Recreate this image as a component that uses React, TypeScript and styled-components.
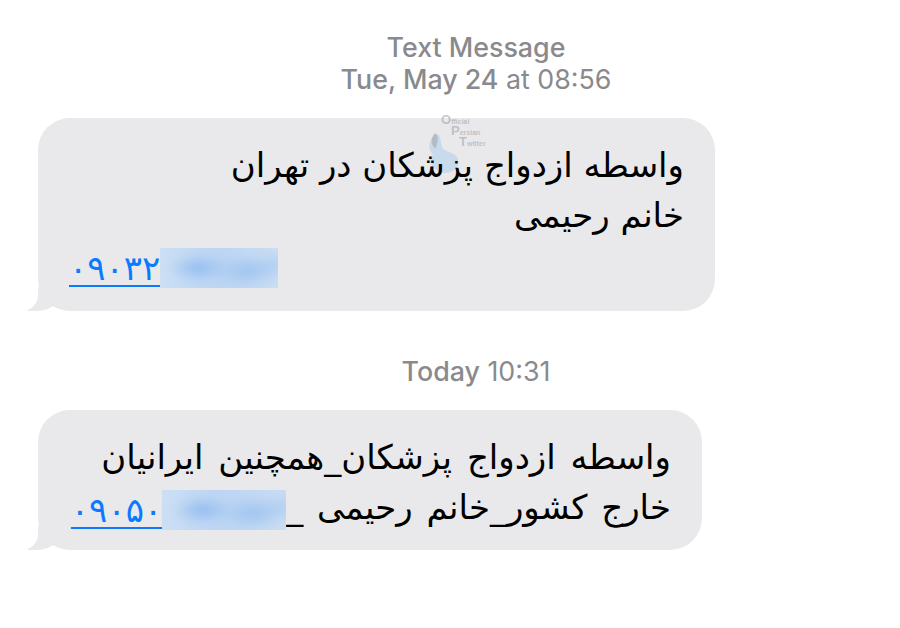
import React from "react";
import styled, { createGlobalStyle } from "styled-components";

const Global = createGlobalStyle`
  html, body { margin: 0; padding: 0; background: #ffffff; }
  body { width: 900px; height: 628px; overflow: hidden; }
`;

const Thread = styled.div`
  display: flex;
  flex-direction: column;
  padding: 31px 0 0 38px;
  font-family: Inter, "Liberation Sans", sans-serif;
`;

const Stamp = styled.div<{ $mt: number; $mb: number }>`
  display: flex;
  flex-direction: column;
  align-items: center;
  width: 876px;
  margin-top: ${(p) => p.$mt}px;
  margin-bottom: ${(p) => p.$mb}px;
  color: #8a8a8e;
  font-size: 26.8px;
  line-height: 32px;
`;

const StampLine = styled.div``;

const Strong = styled.span`
  font-weight: 500;
`;

const Bubble = styled.div<{ $w: number; $h: number }>`
  position: relative;
  box-sizing: border-box;
  width: ${(p) => p.$w}px;
  height: ${(p) => p.$h}px;
  background: #e9e9eb;
  border-radius: 32px;
  padding: 22px 31px 0 31px;
  font-family: "DejaVu Sans", "Noto Sans", sans-serif;
  font-size: 34px;
  line-height: 50px;
  color: #000000;

  &::before {
    content: "";
    position: absolute;
    left: -10px;
    bottom: 0;
    width: 30px;
    height: 24px;
    background: #e9e9eb;
    border-bottom-right-radius: 22px 14px;
  }
  &::after {
    content: "";
    position: absolute;
    left: -30px;
    bottom: 0;
    width: 30px;
    height: 24px;
    background: #ffffff;
    border-bottom-right-radius: 16px;
  }
`;

const Line = styled.div<{ $dir: "rtl" | "ltr"; $ws?: number }>`
  direction: ${(p) => p.$dir};
  text-align: ${(p) => (p.$dir === "rtl" ? "right" : "left")};
  word-spacing: ${(p) => p.$ws ?? 0}px;
  white-space: nowrap;
  position: relative;
  z-index: 1;
`;

const Phone = styled.span`
  direction: ltr;
  unicode-bidi: isolate;
  display: inline-flex;
  align-items: center;
  vertical-align: middle;
  word-spacing: 0;
`;

const Digits = styled.a`
  color: #0a7aff;
  text-decoration: underline;
  text-decoration-thickness: 2px;
  text-underline-offset: 5px;
`;

const Blur = styled.span<{ $w: number }>`
  display: inline-block;
  position: relative;
  width: ${(p) => p.$w}px;
  height: 40px;
  overflow: hidden;
  background: #d3e1f1;
`;

const BlurInk = styled.span`
  position: absolute;
  inset: -10px;
  background:
    radial-gradient(ellipse 30px 14px at 35% 50%, #8fbaf0 0%, transparent 100%),
    radial-gradient(ellipse 34px 16px at 70% 55%, #9cc2f0 0%, transparent 100%),
    radial-gradient(ellipse 26px 14px at 90% 45%, #b2cff2 0%, transparent 100%),
    linear-gradient(90deg, #cfe0f4, #bcd5f3 50%, #cddff2);
  filter: blur(5px);
`;

const Mark = styled.div`
  position: absolute;
  left: 388px;
  top: -3px;
  width: 60px;
  height: 60px;
  z-index: 0;
  pointer-events: none;
  font-family: "Liberation Sans", sans-serif;
  font-weight: 700;
  font-size: 7px;
  line-height: 9px;
  color: rgba(150, 158, 168, 0.55);
`;

const MarkWord = styled.div<{ $ml: number }>`
  margin-left: ${(p) => p.$ml}px;
  position: relative;
`;

const MarkCap = styled.span`
  font-size: 13px;
`;

const MarkBird = styled.svg`
  position: absolute;
  left: -6px;
  top: 14px;
`;

function Watermark() {
  return (
    <Mark>
      <MarkBird width="46" height="48" viewBox="0 0 42 44">
        <path d="M14 4 C 8 10, 6 18, 12 24 C 6 28, 10 36, 20 40 C 30 42, 38 34, 34 26 C 30 20, 22 22, 20 16 C 18 10, 20 6, 14 4 Z" fill="rgba(160,200,235,0.45)" />
        <path d="M14 4 C 10 8, 9 14, 14 18 C 16 12, 18 8, 14 4 Z" fill="rgba(150,150,150,0.45)" />
      </MarkBird>
      <MarkWord $ml={15}><MarkCap>O</MarkCap>fficial</MarkWord>
      <MarkWord $ml={25}><MarkCap>P</MarkCap>ersian</MarkWord>
      <MarkWord $ml={33}><MarkCap>T</MarkCap>witter</MarkWord>
    </Mark>
  );
}

export default function App() {
  return (
    <>
      <Global />
      <Thread>
        <Stamp $mt={0} $mb={23}>
          <StampLine><Strong>Text Message</Strong></StampLine>
          <StampLine>
            <Strong>Tue, May 24</Strong> at 08:56
          </StampLine>
        </Stamp>
        <Bubble $w={677} $h={193}>
          <Watermark />
          <Line $dir="rtl">واسطه ازدواج پزشکان در تهران</Line>
          <Line $dir="rtl">خانم رحیمی</Line>
          <Line $dir="ltr">
            <Phone>
              <Digits href="#">۰۹۰۳۲</Digits>
              <Blur $w={118}>
                <BlurInk />
              </Blur>
            </Phone>
          </Line>
        </Bubble>
        <Stamp $mt={44} $mb={23}>
          <StampLine>
            <Strong>Today</Strong> 10:31
          </StampLine>
        </Stamp>
        <Bubble $w={664} $h={140}>
          <Line $dir="rtl" $ws={4}>واسطه ازدواج پزشکان_همچنین ایرانیان</Line>
          <Line $dir="rtl" $ws={3}>
            خارج کشور_خانم رحیمی _
            <Phone>
              <Digits href="#">۰۹۰۵۰</Digits>
              <Blur $w={124}>
                <BlurInk />
              </Blur>
            </Phone>
          </Line>
        </Bubble>
      </Thread>
    </>
  );
}
